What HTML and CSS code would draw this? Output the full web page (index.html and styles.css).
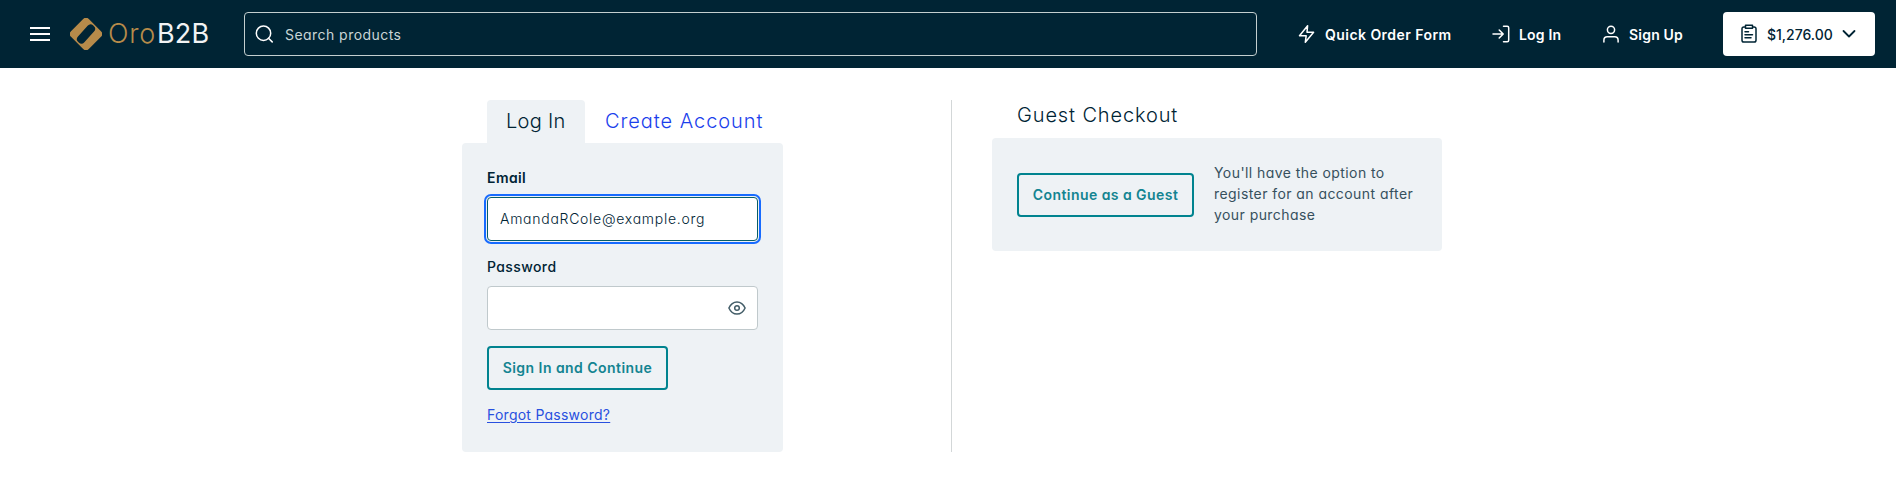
FILE: index.html
```html
<!DOCTYPE html>
<html lang="en">
<head>
<meta charset="utf-8">
<title>OroB2B Checkout</title>
<link rel="stylesheet" href="styles.css">
</head>
<body>
<header class="header">
  <button class="menu" aria-label="Menu"><svg width="20" height="14" viewBox="0 0 20 14"><path d="M0 1h20M0 7h20M0 13h20"/></svg></button>
  <a class="logo">
    <svg width="32" height="32" viewBox="0 0 32 32"><rect x="3.4" y="3.4" width="25.2" height="25.2" rx="4" transform="rotate(45 16 16)" fill="#b78b4a"/><rect x="4.8" y="11.7" width="22.4" height="8.6" rx="4" transform="rotate(-48 16 16)" fill="#002434"/></svg>
    <span class="logo-text"><span class="oro">Oro</span><span class="b2b">B2B</span></span>
  </a>
  <div class="search">
    <svg width="18" height="18" viewBox="0 0 18 18"><circle cx="8.5" cy="8.2" r="7.2"/><path d="M13.5 13.2l3.7 3.7"/></svg>
    <span class="search-text">Search products</span>
  </div>
  <nav class="nav">
    <a class="item quick"><svg width="18" height="20" viewBox="0 0 18 20"><path d="M9.6 1.8L1.5 11.7h6.7l-.9 6.6 8.3-10H9z"/></svg><span>Quick Order Form</span></a>
    <a class="item login"><svg width="18" height="20" viewBox="0 0 18 20"><path d="M1 10h10M7.2 6l4 4-4 4M11.5 2.2h3.7c.9 0 1.5.7 1.5 1.5v12.6c0 .8-.6 1.5-1.5 1.5h-3.7"/></svg><span>Log In</span></a>
    <a class="item signup"><svg width="18" height="20" viewBox="0 0 18 20"><circle cx="9" cy="5.8" r="3.6"/><path d="M1.9 18v-1.8c0-2 1.5-3.4 3.4-3.4h7.4c1.9 0 3.4 1.4 3.4 3.4V18"/></svg><span>Sign Up</span></a>
  </nav>
  <button class="cart">
    <svg width="18" height="20" viewBox="0 0 18 20"><path d="M5.5 3H3.8C2.7 3 2 3.7 2 4.8v11.4C2 17.3 2.7 18 3.8 18h10.4c1.1 0 1.8-.7 1.8-1.8V4.8C16 3.7 15.3 3 14.2 3h-1.7M5.5 1.3h7v3h-7zM5 7.8h3.5M5 10.8h7.5M5 13.8h6"/></svg>
    <span>$1,276.00</span>
    <svg class="chevron" width="14" height="10" viewBox="0 0 14 10"><path d="M1.5 2l5.500 5.500L12.500 2"/></svg>
  </button>
</header>
<main class="checkout">
  <section class="account">
    <div class="tabs"><a class="tab active"><span>Log In</span></a><a class="tab create"><span>Create Account</span></a></div>
    <form class="panel form">
      <label class="label email">Email</label>
      <div class="input focused"><span>AmandaRCole@example.org</span></div>
      <label class="label password">Password</label>
      <div class="input secret"><svg width="18" height="14" viewBox="0 0 18 14"><path d="M.9 7C2.700 3 5.700.9 9 .9S15.300 3 17.100 7C15.300 11 12.300 13.100 9 13.100S2.700 11 .9 7z"/><circle cx="9" cy="7" r="2.300"/></svg></div>
      <button class="button signin" type="button">Sign In and Continue</button>
      <a class="forgot">Forgot Password?</a>
    </form>
  </section>
  <div class="divider"></div>
  <section class="guest">
    <h2 class="title">Guest Checkout</h2>
    <div class="panel guest-panel">
      <button class="button continue" type="button">Continue as a Guest</button>
      <p class="note">You'll have the option to<br>register for an account after<br>your purchase</p>
    </div>
  </section>
</main>
</body>
</html>
```
FILE: styles.css
```css
* { box-sizing: border-box; }
body {
  margin: 0;
  background: #fff;
  color: #002434;
  font: 14px/21px Inter, "Open Sans", sans-serif;
  font-feature-settings: "cv11";
  white-space: nowrap;
}
svg { flex: none; fill: none; stroke: currentColor; stroke-width: 1.5; stroke-linecap: round; stroke-linejoin: round; }
button { font: inherit; font-feature-settings: inherit; color: inherit; padding: 0; border: 0; background: none; }
.header { display: flex; align-items: center; height: 68px; padding: 0 21px 0 30px; background: #002434; color: #fff; }
.menu { display: flex; width: 20px; margin-right: 20px; }
.menu svg { stroke-width: 2; stroke-linecap: butt; }
.logo { display: flex; align-items: center; gap: 6px; width: 174px; }
.logo svg { stroke: none; }
.logo-text { display: flex; font-size: 27px; line-height: 32px; font-weight: 300; }
.oro { width: 49px; color: #b78b4a; letter-spacing: 0.8px; }
.b2b { color: #f2f3f4; font-weight: 400; letter-spacing: 0.2px; }
.search { display: flex; align-items: center; gap: 12px; width: 1013px; height: 44px; padding-left: 10px; border: 1px solid #c4cfcf; border-radius: 4px; }
.search-text { color: #c9d5d6; letter-spacing: 0.45px; }
.nav { display: flex; margin-left: 41px; font-weight: 600; }
.item { display: flex; align-items: center; gap: 9px; }
.quick { width: 194px; letter-spacing: 0.45px; }
.login { width: 110px; letter-spacing: 0.2px; }
.signup { width: 121px; letter-spacing: 0.2px; }
.cart { display: flex; align-items: center; width: 152px; height: 44px; padding-left: 17px; gap: 9px; border-radius: 4px; background: #fff; color: #002434; font-weight: 500; }
.cart > span { width: 66px; text-align: left; }
.chevron { stroke-width: 1.8; }
.checkout { display: flex; height: 384px; padding: 32px 0 0 462px; }
.account { width: 321px; }
.tabs { display: flex; height: 43px; padding-left: 25px; font-size: 20px; line-height: 43px; font-weight: 300; }
.tab { padding-left: 19px; }
.active { width: 98px; border-radius: 4px 4px 0 0; background: #eef2f5; letter-spacing: 0.3px; }
.create { padding-left: 20px; color: #1b3fec; letter-spacing: 0.95px; }
.panel { border-radius: 4px; background: #eef2f5; }
.form { display: flex; flex-direction: column; align-items: flex-start; height: 309px; padding: 24px 25px 0; }
.label { font-weight: 600; letter-spacing: 0.4px; }
.email { margin-bottom: 9px; }
.password { margin: 15px 0 9px; font-weight: 500; letter-spacing: 0.4px; }
.input { display: flex; align-items: center; width: 271px; height: 44px; padding: 0 12px 1px; border: 1px solid #c0c9cc; border-radius: 4px; background: #fff; }
.focused { border-color: #075e68; outline: 2px solid #176bff; outline-offset: 1px; font-weight: 300; letter-spacing: 0.73px; }
.secret { justify-content: flex-end; padding-right: 11px; color: #435d68; }
.button { height: 44px; padding-bottom: 1px; border: 2px solid #00838f; border-radius: 4px; color: #138491; font-weight: 600; letter-spacing: 0.45px; }
.signin { width: 181px; margin-top: 16px; }
.forgot { margin-top: 14px; color: #2850df; letter-spacing: 0.25px; text-decoration: underline; text-underline-offset: 2px; }
.divider { width: 1px; height: 352px; margin-left: 168px; background: #d3d7d8; }
.guest { width: 450px; margin-left: 40px; }
.title { height: 38px; margin: 0; padding-left: 25px; font-size: 20px; line-height: 30px; font-weight: 300; letter-spacing: 0.87px; }
.guest-panel { display: flex; height: 113px; padding: 24px 25px 0; }
.continue { width: 177px; margin-top: 11px; }
.note { margin: 0 0 0 20px; color: #36505d; letter-spacing: 0.43px; }
```
